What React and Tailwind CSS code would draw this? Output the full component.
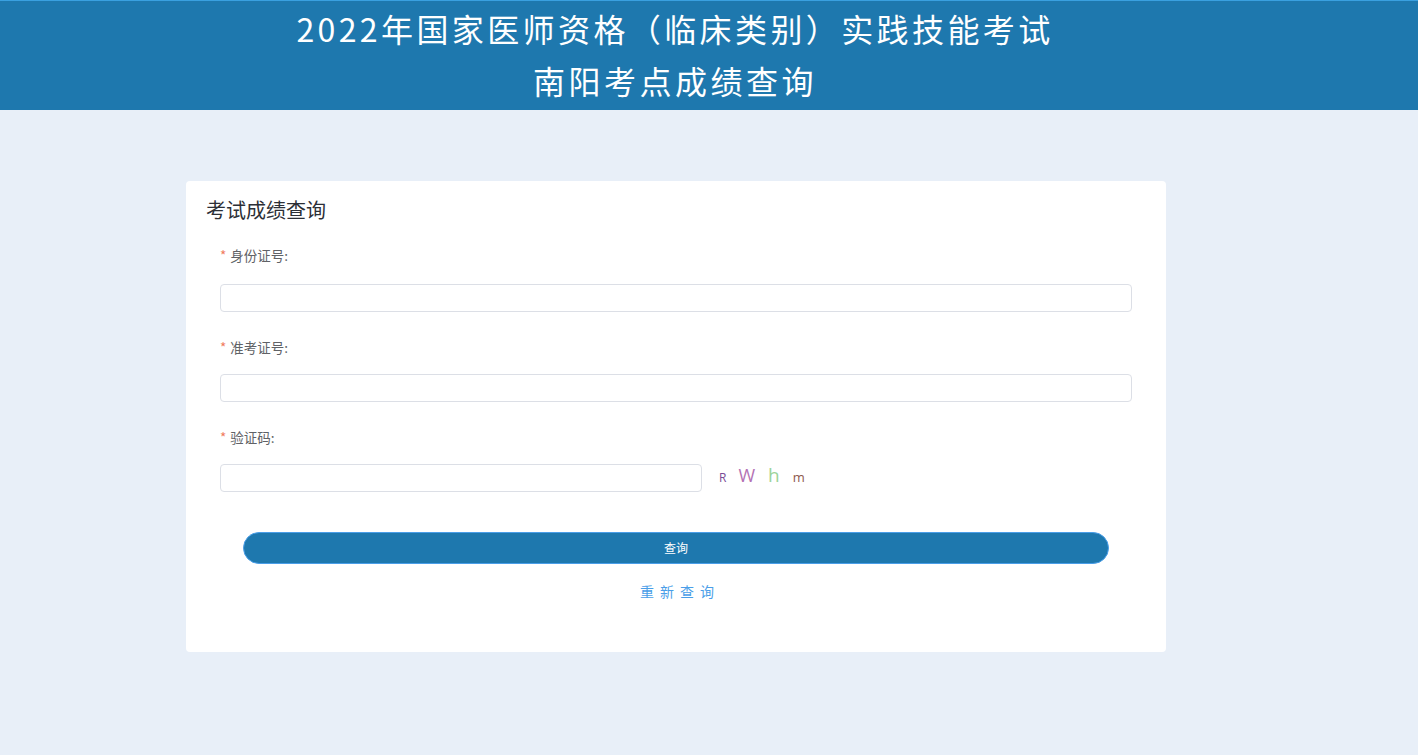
export default function App() {
  const font = { fontFamily: '"Noto Sans CJK SC", "Noto Sans", sans-serif' };
  const Label = ({ children }) => (
    <div className="flex items-center h-[20px] text-[13.5px] text-[#606266]">
      <span className="text-[#f0795a] mr-[4px]">*</span>
      <span>{children}</span>
    </div>
  );
  return (
    <div className="min-h-[755px] w-full bg-[#e8eff8]" style={font}>
      <div className="h-[110px] bg-[#1e78ae] border-t border-[#3aa0e0]">
        <div className="w-[1350px] flex flex-col items-center text-white">
          <div className="h-[54px] flex items-center text-[32px] tracking-[3.4px] leading-none">
            2022年国家医师资格（临床类别）实践技能考试
          </div>
          <div className="h-[50px] flex items-center text-[32px] tracking-[3.5px] leading-none">
            南阳考点成绩查询
          </div>
        </div>
      </div>
      <div className="w-[1352px] pt-[71px]">
        <div className="mx-auto w-[980px] h-[471px] bg-white rounded-[4px] pt-[16px] px-[20px]">
          <div className="text-[20px] text-[#2c2f36] leading-[26px]">考试成绩查询</div>
          <div className="px-[14px] pt-[22px]">
            <Label>身份证号:</Label>
            <div className="mt-[19px] h-[28px] w-[912px] border border-[#dcdfe6] rounded-[4px]" />
            <div className="mt-[25px]"><Label>准考证号:</Label></div>
            <div className="mt-[17px] h-[28px] w-[912px] border border-[#dcdfe6] rounded-[4px]" />
            <div className="mt-[25px]"><Label>验证码:</Label></div>
            <div className="mt-[17px] h-[28px] flex items-center">
              <div className="h-[28px] w-[482px] border border-[#dcdfe6] rounded-[4px]" />
              <div className="flex items-baseline ml-[17px] h-[28px] leading-[22px]" style={{ fontFamily: '"Open Sans", sans-serif' }}>
                <span className="text-[12px] text-[#7a4c96]">R</span>
                <span className="ml-[12px] text-[18px] text-[#b472b4]">W</span>
                <span className="ml-[13px] text-[19px] text-[#9cd39a]">h</span>
                <span className="ml-[13px] text-[13px] text-[#8e5a4e]">m</span>
              </div>
            </div>
            <div className="mt-[40px] ml-[23px] w-[866px] h-[32px] rounded-full bg-[#1e78ae] border border-[#4a9ee8] flex items-center justify-center text-white text-[12px]">
              查询
            </div>
            <div className="mt-[17px] text-center text-[14px] text-[#4a9ee8] tracking-[6px] pl-[8px]">重新查询</div>
          </div>
        </div>
      </div>
    </div>
  );
}
